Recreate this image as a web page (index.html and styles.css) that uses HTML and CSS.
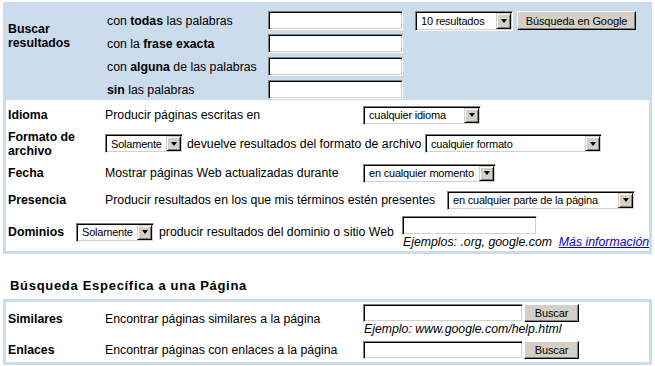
FILE: index.html
```html
<!DOCTYPE html>
<html lang="es">
<head>
<meta charset="utf-8">
<title>Búsqueda avanzada</title>
<link rel="stylesheet" href="styles.css">
</head>
<body>
<div class="panel">
  <div class="top">
    <div class="top-label">Buscar<br>resultados</div>
    <div class="top-rows">
      <div class="trow">
        <span class="tdesc">con <b>todas</b> las palabras</span>
        <input class="txt w135" type="text">
        <span class="fsel res"><span class="val">10 resultados</span><span class="arr"></span></span>
        <button class="btn google">Búsqueda en Google</button>
      </div>
      <div class="trow">
        <span class="tdesc">con la <b>frase exacta</b></span>
        <input class="txt w135" type="text">
      </div>
      <div class="trow">
        <span class="tdesc">con <b>alguna</b> de las palabras</span>
        <input class="txt w135" type="text">
      </div>
      <div class="trow">
        <span class="tdesc"><b>sin</b> las palabras</span>
        <input class="txt w135" type="text">
      </div>
    </div>
  </div>
  <div class="inner">
    <div class="row r-idioma">
      <div class="lab">Idioma</div>
      <div class="desc">Producir páginas escritas en</div>
      <span class="fsel s-idioma"><span class="val">cualquier idioma</span><span class="arr"></span></span>
    </div>
    <div class="row r-formato">
      <div class="lab">Formato de<br>archivo</div>
      <span class="fsel s-sol"><span class="val">Solamente</span><span class="arr"></span></span>
      <span class="ftext">devuelve resultados del formato de archivo</span>
      <span class="fsel s-formato"><span class="val">cualquier formato</span><span class="arr"></span></span>
    </div>
    <div class="row r-fecha">
      <div class="lab">Fecha</div>
      <div class="desc">Mostrar páginas Web actualizadas durante</div>
      <span class="fsel s-fecha"><span class="val">en cualquier momento</span><span class="arr"></span></span>
    </div>
    <div class="row r-presencia">
      <div class="lab">Presencia</div>
      <div class="desc wide">Producir resultados en los que mis términos estén presentes</div>
      <span class="fsel s-presencia"><span class="val">en cualquier parte de la página</span><span class="arr"></span></span>
    </div>
    <div class="row r-dominios">
      <div class="lab dom">Dominios</div>
      <span class="fsel s-sol"><span class="val">Solamente</span><span class="arr"></span></span>
      <span class="dtext">producir resultados del dominio o sitio Web</span>
      <div class="dcell">
        <input class="txt w135" type="text">
        <div class="example">Ejemplos: .org, google.com &nbsp;<a href="#">Más información</a></div>
      </div>
    </div>
  </div>
</div>

<h3 class="sec">Búsqueda Específica a una Página</h3>

<div class="panel p2">
  <div class="inner inner2">
    <div class="row r-sim">
      <div class="lab">Similares</div>
      <div class="desc">Encontrar páginas similares a la página</div>
      <div class="scell">
        <div class="sline">
          <input class="txt w160" type="text">
          <button class="btn buscar">Buscar</button>
        </div>
        <div class="example">Ejemplo: www.google.com/help.html</div>
      </div>
    </div>
    <div class="row r-enl">
      <div class="lab">Enlaces</div>
      <div class="desc">Encontrar páginas con enlaces a la página</div>
      <div class="sline">
        <input class="txt w160" type="text">
        <button class="btn buscar">Buscar</button>
      </div>
    </div>
  </div>
</div>
</body>
</html>
```

FILE: styles.css
```css
* { box-sizing: border-box; }

body {
  margin: 2px 3px 0;
  font-family: "Liberation Sans", Arial, sans-serif;
  font-size: 12.3px;
  color: #000;
  background: #fff;
}

.panel {
  width: 649px;
  background: #cbdced;
  padding: 0 3px 3px;
}

/* top search block */
.top {
  display: flex;
  height: 98px;
}
.top-label {
  width: 101px;
  padding: 20px 0 0 2px;
  font-weight: bold;
  line-height: 14px;
}
.top-rows { padding-top: 7px; }
.trow {
  display: flex;
  align-items: center;
  height: 23px;
}
.tdesc { width: 161px; white-space: nowrap; }

/* form controls in Windows classic look */
.txt {
  display: block;
  height: 19px;
  margin: 0;
  padding: 0 2px;
  background: #fff;
  border: 1px solid;
  border-color: #808080 #fff #fff #808080;
  box-shadow: inset 1px 1px 0 #000, inset -1px -1px 0 #d4d0c8;
  font: 12px "Liberation Sans", Arial, sans-serif;
  outline: none;
}
.w135 { width: 135px; }
.w160 { width: 160px; height: 18px; }

.fsel {
  display: inline-flex;
  flex: none;
  height: 19px;
  background: #fff;
  border: 1px solid;
  border-color: #808080 #fff #fff #808080;
  box-shadow: inset 1px 1px 0 #000, inset -1px -1px 0 #d4d0c8;
  padding: 1px;
  font-size: 11px;
  letter-spacing: -0.2px;
}
.fsel .val {
  flex: 1;
  display: flex;
  align-items: center;
  padding-left: 4px;
  white-space: nowrap;
  overflow: hidden;
}
.fsel .arr {
  flex: none;
  width: 15px;
  display: flex;
  align-items: center;
  justify-content: center;
  background: #d4d0c8;
  border: 1px solid;
  border-color: #d4d0c8 #000 #000 #d4d0c8;
  box-shadow: inset 1px 1px 0 #fff, inset -1px -1px 0 #808080;
}
.fsel .arr::before {
  content: "";
  width: 0;
  height: 0;
  border-left: 3.5px solid transparent;
  border-right: 3.5px solid transparent;
  border-top: 4px solid #000;
}
.res { width: 98px; height: 20px; margin-left: 12px; }
.s-idioma { width: 118px; }
.s-sol { width: 78px; }
.s-formato { width: 177px; }
.s-fecha { width: 133px; }
.s-presencia { width: 188px; }

.btn {
  flex: none;
  margin: 0;
  padding: 0;
  background: #d4d0c8;
  border: 1px solid;
  border-color: #fff #000 #000 #fff;
  box-shadow: inset -1px -1px 0 #808080;
  font: 11px "Liberation Sans", Arial, sans-serif;
  letter-spacing: -0.1px;
  color: #000;
}
.google { width: 119px; height: 19px; margin-left: 4px; }
.buscar { width: 55px; height: 18px; margin-left: 1px; }

/* white inner block */
.inner {
  background: #fff;
  padding-top: 2px;
}
.row {
  display: flex;
  align-items: center;
}
.lab {
  flex: none;
  width: 99px;
  padding-left: 2px;
  font-weight: bold;
  line-height: 14px;
}
.lab.dom { width: 70px; }
.desc { flex: none; width: 258px; white-space: nowrap; }
.desc.wide { width: 342px; }
.ftext { flex: none; width: 242px; padding-left: 4px; white-space: nowrap; }
.dtext { flex: none; width: 248px; padding-left: 5px; white-space: nowrap; }

.r-idioma { height: 26px; }
.r-formato { height: 31px; }
.r-fecha { height: 28px; }
.r-presencia { height: 26px; }
.r-dominios { height: 38px; }

.dcell { padding-top: 1px; }
.example {
  font-style: italic;
  line-height: 15px;
  white-space: nowrap;
  padding-left: 1px;
}
.example a { color: #0000cc; }

/* second block */
.sec {
  margin: 24px 0 6px 7px;
  font-size: 13px;
  line-height: 15px;
  letter-spacing: 0.7px;
  font-weight: bold;
}
.p2 { padding-top: 3px; }
.sline { display: flex; align-items: flex-start; }
.r-sim { height: 36px; padding-top: 2px; align-items: flex-start; }
.r-sim .lab, .r-sim .desc { margin-top: 8px; }
.r-enl { height: 24px; }
.inner2 { padding-top: 0; }
.scell .example { padding-left: 1px; }
```
